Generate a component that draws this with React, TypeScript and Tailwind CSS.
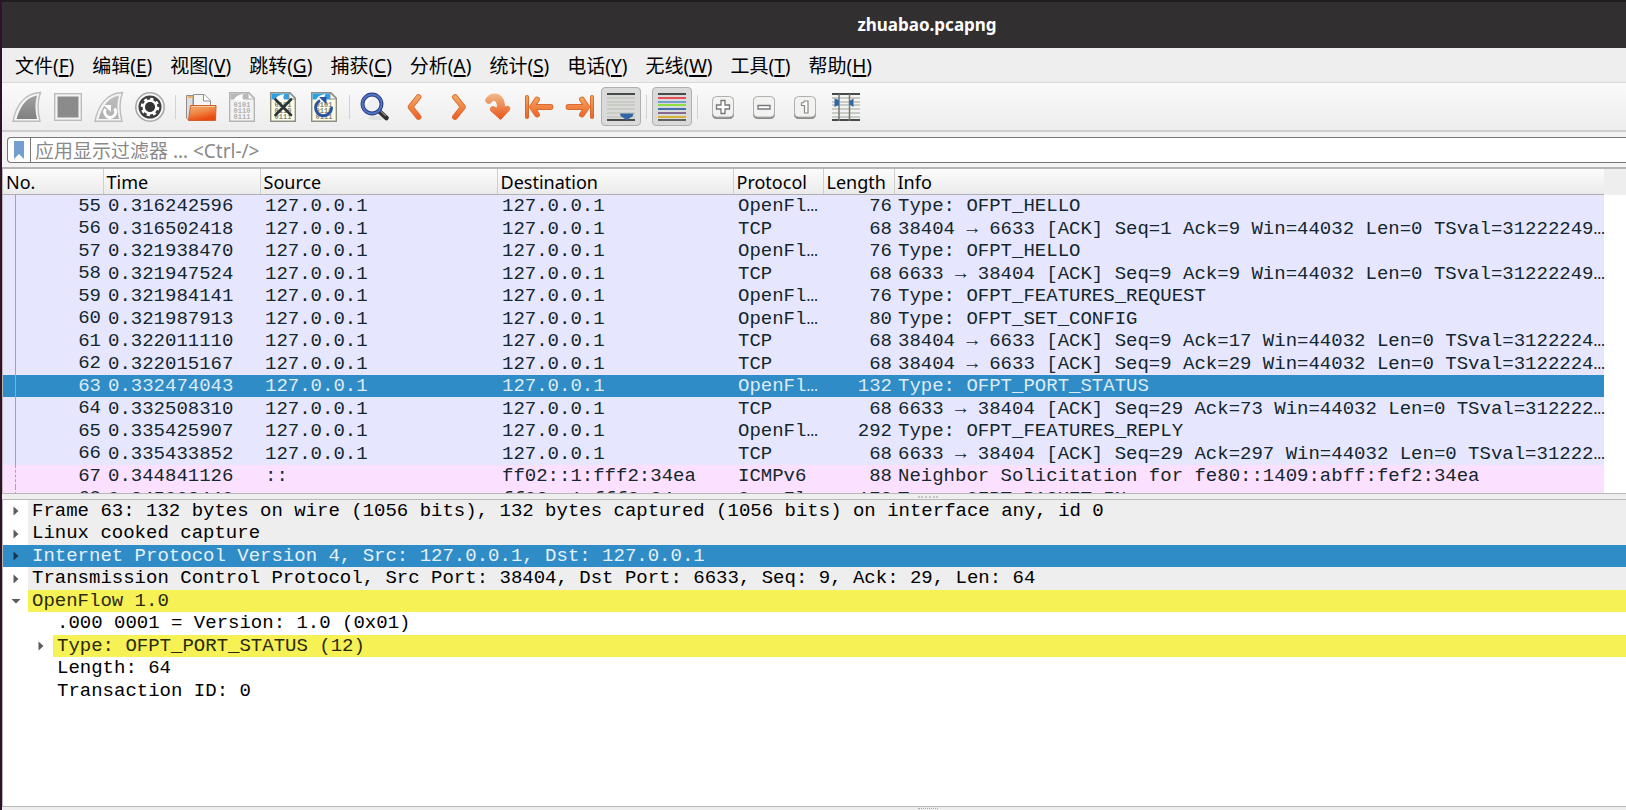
import { useState } from 'react';
import type { ReactNode } from 'react';
import clsx from 'clsx';

const menus = [
  ['文件', 'F'],
  ['编辑', 'E'],
  ['视图', 'V'],
  ['跳转', 'G'],
  ['捕获', 'C'],
  ['分析', 'A'],
  ['统计', 'S'],
  ['电话', 'Y'],
  ['无线', 'W'],
  ['工具', 'T'],
  ['帮助', 'H'],
];

const columns = [
  { name: 'No.', width: 'w-[100px]' },
  { name: 'Time', width: 'w-[157px]' },
  { name: 'Source', width: 'w-[237px]' },
  { name: 'Destination', width: 'w-[236px]' },
  { name: 'Protocol', width: 'w-[90px]' },
  { name: 'Length', width: 'w-[71px]' },
  { name: 'Info', width: '' },
];

const local = '127.0.0.1';

const packets = [
  { no: 55, time: '0.316242596', src: local, dst: local, protocol: 'OpenFl…', length: 76, info: 'Type: OFPT_HELLO' },
  { no: 56, time: '0.316502418', src: local, dst: local, protocol: 'TCP', length: 68, info: '38404 → 6633 [ACK] Seq=1 Ack=9 Win=44032 Len=0 TSval=31222249…' },
  { no: 57, time: '0.321938470', src: local, dst: local, protocol: 'OpenFl…', length: 76, info: 'Type: OFPT_HELLO' },
  { no: 58, time: '0.321947524', src: local, dst: local, protocol: 'TCP', length: 68, info: '6633 → 38404 [ACK] Seq=9 Ack=9 Win=44032 Len=0 TSval=31222249…' },
  { no: 59, time: '0.321984141', src: local, dst: local, protocol: 'OpenFl…', length: 76, info: 'Type: OFPT_FEATURES_REQUEST' },
  { no: 60, time: '0.321987913', src: local, dst: local, protocol: 'OpenFl…', length: 80, info: 'Type: OFPT_SET_CONFIG' },
  { no: 61, time: '0.322011110', src: local, dst: local, protocol: 'TCP', length: 68, info: '38404 → 6633 [ACK] Seq=9 Ack=17 Win=44032 Len=0 TSval=3122224…' },
  { no: 62, time: '0.322015167', src: local, dst: local, protocol: 'TCP', length: 68, info: '38404 → 6633 [ACK] Seq=9 Ack=29 Win=44032 Len=0 TSval=3122224…' },
  { no: 63, time: '0.332474043', src: local, dst: local, protocol: 'OpenFl…', length: 132, info: 'Type: OFPT_PORT_STATUS' },
  { no: 64, time: '0.332508310', src: local, dst: local, protocol: 'TCP', length: 68, info: '6633 → 38404 [ACK] Seq=29 Ack=73 Win=44032 Len=0 TSval=312222…' },
  { no: 65, time: '0.335425907', src: local, dst: local, protocol: 'OpenFl…', length: 292, info: 'Type: OFPT_FEATURES_REPLY' },
  { no: 66, time: '0.335433852', src: local, dst: local, protocol: 'TCP', length: 68, info: '6633 → 38404 [ACK] Seq=29 Ack=297 Win=44032 Len=0 TSval=31222…' },
  { no: 67, time: '0.344841126', src: '::', dst: 'ff02::1:fff2:34ea', protocol: 'ICMPv6', length: 88, info: 'Neighbor Solicitation for fe80::1409:abff:fef2:34ea' },
  { no: 68, time: '0.345083440', src: '::', dst: 'ff02::1:fff2:34ea', protocol: 'OpenFl…', length: 172, info: 'Type: OFPT_PACKET_IN' },
];

const details = [
  { text: 'Frame 63: 132 bytes on wire (1056 bits), 132 bytes captured (1056 bits) on interface any, id 0', depth: 0, arrow: 'right', tone: 'gray' },
  { text: 'Linux cooked capture', depth: 0, arrow: 'right', tone: 'gray' },
  { text: 'Internet Protocol Version 4, Src: 127.0.0.1, Dst: 127.0.0.1', depth: 0, arrow: 'right', tone: 'gray' },
  { text: 'Transmission Control Protocol, Src Port: 38404, Dst Port: 6633, Seq: 9, Ack: 29, Len: 64', depth: 0, arrow: 'right', tone: 'gray' },
  { text: 'OpenFlow 1.0', depth: 0, arrow: 'down', tone: 'yellow' },
  { text: '.000 0001 = Version: 1.0 (0x01)', depth: 1, arrow: '', tone: '' },
  { text: 'Type: OFPT_PORT_STATUS (12)', depth: 1, arrow: 'right', tone: 'yellow' },
  { text: 'Length: 64', depth: 1, arrow: '', tone: '' },
  { text: 'Transaction ID: 0', depth: 1, arrow: '', tone: '' },
];

function Icon({ children }: { children: ReactNode }) {
  return (
    <svg viewBox="0 0 32 32" className="h-8 w-8 shrink-0" fill="none" aria-hidden="true">
      {children}
    </svg>
  );
}

function FinIcon({ id, from, to, children }: { id: string; from: string; to: string; children?: ReactNode }) {
  return (
    <Icon>
      <defs>
        <linearGradient id={id} x1="0" y1="0" x2="0" y2="1">
          <stop offset="0" stopColor={from} />
          <stop offset="1" stopColor={to} />
        </linearGradient>
      </defs>
      <path d="M2 30.3C4.500 17 12 2 29.500 1.500C26 11 26.500 21 29 30.300Z" fill="#f4f4f4" stroke="#bcbcbc" strokeWidth="1.4" />
      <path d="M5.500 28C8.500 17.500 14 6.500 26 4.500C23.800 12 24 20 26 28Z" fill={`url(#${id})`} />
      {children}
    </Icon>
  );
}

function StopIcon() {
  return (
    <Icon>
      <rect x="2.7" y="2.7" width="26.6" height="26.6" fill="#f4f4f4" stroke="#bcbcbc" strokeWidth="1.4" />
      <rect x="5.5" y="5.5" width="21" height="21" fill="#8b8b8b" />
    </Icon>
  );
}

function OptionsIcon() {
  return (
    <Icon>
      <circle cx="16" cy="16" r="14.2" fill="#f6f6f6" stroke="#a9a9a9" strokeWidth="1.6" />
      <circle cx="16" cy="16" r="11.5" fill="#3d3d3d" />
      <circle cx="16" cy="16" r="6.2" stroke="#fff" strokeWidth="2.6" />
      <circle cx="16" cy="16" r="8.1" stroke="#fff" strokeWidth="2.4" strokeDasharray="3.18 3.18" />
      <circle cx="16" cy="16" r="4.8" fill="#333" />
    </Icon>
  );
}

function OpenIcon() {
  return (
    <Icon>
      <defs>
        <linearGradient id="folder" x1="0" y1="0" x2="0.4" y2="1">
          <stop offset="0" stopColor="#f0b078" />
          <stop offset="0.5" stopColor="#f08848" />
          <stop offset="1" stopColor="#e84a10" />
        </linearGradient>
      </defs>
      <path d="M1.500 4.500H8V29H3.500L1.500 27Z" fill="#dedede" stroke="#8d8d8d" />
      <path d="M3 6H8" stroke="#f0a040" strokeWidth="1.5" />
      <path d="M8.500 15V3.500H19L25.500 9.500V15Z" fill="#f5f5f5" stroke="#909090" />
      <path d="M18.500 3.500V10H25.500" fill="#fff" stroke="#909090" />
      <path d="M5.500 14.500H31L30.500 29.500H3.500Z" fill="url(#folder)" stroke="#d0602c" />
      <path d="M6.500 15.500H30" stroke="#f8c89a" />
    </Icon>
  );
}

function FileIcon({ gray, children }: { gray?: boolean; children?: ReactNode }) {
  const edge = gray ? '#b4b4b4' : '#8b8f86';

  return (
    <Icon>
      <path d="M3.700 1.700H23L28.300 7V30.300H3.700Z" fill={gray ? '#f3f3f3' : '#fdfde8'} stroke={edge} strokeWidth="1.4" />
      <path d="M4.500 2.500H22.500V8.500H4.500Z" fill={gray ? '#b8b8b8' : '#2f9fe4'} />
      <path d="M8 9C9.500 5.500 12 4 17.500 3C16 5.500 16 7 17.500 9Z" fill="#fff" />
      <path d="M22 1.700V8H28.300Z" fill="#fafafa" stroke={edge} />
      <g fill={gray ? '#b0b0b0' : '#85857c'} fontFamily="Liberation Mono" fontSize="7" fontWeight="700" textAnchor="middle">
        <text x="16" y="16">0101</text>
        <text x="16" y="22">0110</text>
        <text x="16" y="28">0111</text>
      </g>
      {children}
    </Icon>
  );
}

function FindIcon() {
  return (
    <Icon>
      <ellipse cx="18" cy="27" rx="9" ry="2" fill="#e0e0e0" />
      <path d="M20 20L27.500 27" stroke="#2e2e2e" strokeWidth="4.6" strokeLinecap="round" />
      <path d="M21.500 20L27 25" stroke="#85857c" strokeWidth="1.5" />
      <circle cx="13" cy="13" r="9.5" fill="#eef0f4" stroke="#22387c" strokeWidth="3.8" />
      <circle cx="13" cy="13" r="9.6" stroke="#5573c4" strokeWidth="2" />
      <path d="M7.500 13A5.500 5.500 0 0 1 13 7.500" stroke="#fff" strokeWidth="2" />
    </Icon>
  );
}

// Orange glyphs share a darker rim under a gradient stroke
function OrangeIcon({ id, d, bar }: { id: string; d: string; bar?: string }) {
  return (
    <Icon>
      <defs>
        <linearGradient id={id} gradientUnits="userSpaceOnUse" x1="16" y1="3" x2="16" y2="29">
          <stop offset="0" stopColor="#f2b068" />
          <stop offset="1" stopColor="#ec5a20" />
        </linearGradient>
      </defs>
      {bar && <path d={bar} stroke="#dc6428" strokeWidth="4" strokeLinecap="round" />}
      {bar && <path d={bar} stroke={`url(#${id})`} strokeWidth="2.2" strokeLinecap="round" />}
      <path d={d} stroke="#dc6a30" strokeWidth="5.8" strokeLinecap="round" strokeLinejoin="round" />
      <path d={d} stroke={`url(#${id})`} strokeWidth="4" strokeLinecap="round" strokeLinejoin="round" />
    </Icon>
  );
}

function GoToIcon() {
  return (
    <Icon>
      <defs>
        <linearGradient id="goto" x1="0" y1="0" x2="0" y2="1">
          <stop offset="0" stopColor="#f0b888" />
          <stop offset="1" stopColor="#ea5418" />
        </linearGradient>
      </defs>
      <path
        d="M3.500 9.500C5 4.500 9 3 13 3C19 3 22.500 8 22.500 16L26 15Q29 16 27.500 19L18.500 28.500L8.500 19.500Q7.500 16 11 15.500L15.500 17C15.500 11.500 14 9 11 9.500C9.500 10 9.500 12 7.500 12.500Q4 12.500 3.500 9.500Z"
        fill="url(#goto)"
        stroke="url(#goto)"
      />
    </Icon>
  );
}

function LinesIcon({ colors, children }: { colors: string[]; children?: ReactNode }) {
  return (
    <Icon>
      {colors.map((color, i) => (
        <rect key={i} x="2" y={[2, 6, 10, 13, 17, 21, 25, 28][i]} width="28" height="2" fill={color} />
      ))}
      {children}
    </Icon>
  );
}

function KeyIcon({ children }: { children: ReactNode }) {
  return (
    <Icon>
      <rect x="5" y="6" width="22" height="22" rx="4.5" fill="#8a8a8a" />
      <rect x="5.5" y="5.5" width="21" height="20.5" rx="4" fill="#f2f2f0" stroke="#b0b0b0" />
      {children}
    </Icon>
  );
}

const gray = '#c9ccc4';
const dark = '#454a4b';

const tools: ({ label: string; icon: ReactNode; pressed?: boolean } | null)[] = [
  { label: 'Start capture', icon: <FinIcon id="start" from="#a0a0a0" to="#808080" /> },
  { label: 'Stop capture', icon: <StopIcon /> },
  {
    label: 'Restart capture',
    icon: (
      <FinIcon id="restart" from="#bdbdbd" to="#b0b0b0">
        <path d="M12.500 18A5.500 5.500 0 1 0 21.500 17.500" stroke="#fff" strokeWidth="3" />
        <path d="M10.500 14H18V21Z" fill="#fff" />
      </FinIcon>
    ),
  },
  { label: 'Capture options', icon: <OptionsIcon /> },
  null,
  { label: 'Open', icon: <OpenIcon /> },
  { label: 'Save', icon: <FileIcon gray /> },
  {
    label: 'Close file',
    icon: (
      <FileIcon>
        <path d="M8.500 8.500L24 24M24 8.500L8.500 24" stroke="#2e3436" strokeWidth="2.6" strokeLinecap="round" />
      </FileIcon>
    ),
  },
  {
    label: 'Reload file',
    icon: (
      <FileIcon>
        <path d="M12 9.500A8 8 0 1 0 23.500 16" stroke="#2a56a0" strokeWidth="3" />
        <path d="M11 6H18.500V13.500Z" fill="#2a56a0" />
      </FileIcon>
    ),
  },
  null,
  { label: 'Find packet', icon: <FindIcon /> },
  { label: 'Previous packet', icon: <OrangeIcon id="prev" d="M18.500 6L10.500 16L18.500 26" /> },
  { label: 'Next packet', icon: <OrangeIcon id="next" d="M14 6L22 16L14 26" /> },
  { label: 'Go to packet', icon: <GoToIcon /> },
  { label: 'First packet', icon: <OrangeIcon id="first" bar="M4 6V26" d="M14 8.500L9 16L14 23.500M9.500 16H27.500" /> },
  { label: 'Last packet', icon: <OrangeIcon id="last" bar="M28 6V26" d="M18 8.500L23 16L18 23.500M22.500 16H4.500" /> },
  {
    label: 'Auto scroll',
    pressed: true,
    icon: (
      <LinesIcon colors={[dark, gray, gray, gray, gray, gray, gray, dark]}>
        <path d="M15 22.500H28.500C28.500 25 27 26 25.500 26.500L22 29.500L18 26.500C16.500 26 15 25 15 22.500Z" fill="#3465a4" />
      </LinesIcon>
    ),
  },
  null,
  {
    label: 'Colorize',
    pressed: true,
    icon: <LinesIcon colors={[dark, '#e85055', '#729fcf', '#8fe040', '#4470ac', '#866a90', '#d6b238', '#60635f']} />,
  },
  null,
  {
    label: 'Zoom in',
    icon: (
      <KeyIcon>
        <path d="M14 9.500H18V14H22.500V18H18V22.500H14V18H9.500V14H14Z" fill="#fff" stroke="#777" strokeWidth="1.3" />
      </KeyIcon>
    ),
  },
  {
    label: 'Zoom out',
    icon: (
      <KeyIcon>
        <path d="M10 14.500H22V18H10Z" fill="#fff" stroke="#777" strokeWidth="1.3" />
      </KeyIcon>
    ),
  },
  {
    label: 'Normal size',
    icon: (
      <KeyIcon>
        <path d="M15.500 10H19V22H15.500V14.500H12.500V12Q15 12 15.500 10Z" fill="#fff" stroke="#888" strokeWidth="1.2" />
      </KeyIcon>
    ),
  },
  {
    label: 'Resize columns',
    icon: (
      <LinesIcon colors={[dark, gray, gray, gray, gray, gray, gray, dark]}>
        <path d="M9 3V30M19.500 3V30" stroke="#777a76" strokeWidth="1.5" />
        <path d="M4.500 7.500L9 9V14L4.500 16ZM23.500 7.500L19.500 10V13.500L23.500 16Z" fill="#3465a4" />
      </LinesIcon>
    ),
  },
];

function Arrow({ kind }: { kind: string }) {
  return (
    <svg viewBox="0 0 10 10" className="h-[10px] w-[10px]" aria-hidden="true">
      {kind === 'right' && <path d="M2.500 0.500L7.500 5L2.500 9.500Z" fill="currentColor" />}
      {kind === 'down' && <path d="M0.500 3H9.500L5 7.500Z" fill="currentColor" />}
    </svg>
  );
}

export default function App() {
  const [filter, setFilter] = useState('');
  const [selected, setSelected] = useState(63);
  const [selectedDetail, setSelectedDetail] = useState(2);

  return (
    <div className="flex h-screen flex-col overflow-hidden border-l-2 border-[#2f1226] bg-[#eeeeee] font-['Noto_Sans','Noto_Sans_CJK_SC',sans-serif] text-black">
      <header className="flex h-12 shrink-0 items-center justify-center border-t-2 border-[#1f1d1d] bg-[#322f30] pl-[226px]">
        <h1 className="text-[17px] font-bold text-white">zhuabao.pcapng</h1>
      </header>

      <nav className="flex h-[35px] shrink-0 items-center gap-[18px] border-b border-[#d8d8d8] px-[13px] pt-px">
        {menus.map(([name, key]) => (
          <button key={key} className="text-[19px] leading-6 whitespace-nowrap">
            {name}(<span className="underline decoration-2 underline-offset-2">{key}</span>)
          </button>
        ))}
      </nav>

      <div className="flex h-[49px] shrink-0 items-center gap-px border-b-2 border-[#cdcdcd] bg-linear-to-b from-[#fafafa] to-[#ededed] px-[5px]">
        {tools.map((tool, i) =>
          tool ? (
            <button
              key={tool.label}
              aria-label={tool.label}
              aria-pressed={tool.pressed}
              className={clsx(
                'flex h-[39px] w-10 shrink-0 items-center justify-center rounded border',
                tool.pressed ? 'border-[#b0b0b0] bg-[#dadada]' : 'border-transparent'
              )}
            >
              {tool.icon}
            </button>
          ) : (
            <div key={i} className="flex w-[9px] shrink-0 justify-center">
              <div className="h-6 w-px bg-[#d2d2d2]" />
            </div>
          )
        )}
      </div>

      <div className="shrink-0 border-b-2 border-[#b5b5b5] bg-[#f3f3f3] pt-[5px] pb-1 pl-[5px]">
        <div className="flex h-[26px] rounded-l border border-r-0 border-[#777777] bg-white">
          <button aria-label="Bookmarks" className="flex w-[23px] shrink-0 justify-center border-r border-[#777777] pt-[3px]">
            <svg viewBox="0 0 10 18" className="h-[18px] w-[10px]" aria-hidden="true">
              <path d="M0 0H10V18L5 13L0 18Z" fill="#729fcf" />
            </svg>
          </button>
          <input
            aria-label="应用显示过滤器"
            value={filter}
            onChange={(e) => setFilter(e.target.value)}
            placeholder="应用显示过滤器 … <Ctrl-/>"
            className="min-w-0 flex-1 pt-px pl-1 text-[19px] leading-6 outline-none placeholder:text-[#8a8a8a]"
          />
        </div>
      </div>

      <div className="flex h-[324px] shrink-0 overflow-hidden border-l border-[#b8b8b8] bg-white">
        <div className="min-w-0 flex-1">
          <table className="w-full table-fixed border-collapse">
            <thead>
              <tr className="h-[25px] bg-linear-to-b from-[#fcfcfc] to-[#eaeaea]">
                {columns.map((column) => (
                  <th
                    key={column.name}
                    className={clsx(
                      'border-r border-b border-r-[#cfcfcf] border-b-[#b0b0b0] p-0 pt-px pl-[3px] text-left text-[18px] leading-6 font-normal last:border-r-0',
                      column.width
                    )}
                  >
                    {column.name}
                  </th>
                ))}
              </tr>
            </thead>
            <tbody className="font-['Liberation_Mono',monospace] text-[19px] leading-[22px] whitespace-pre">
              {packets.map((packet) => (
                <tr
                  key={packet.no}
                  onClick={() => setSelected(packet.no)}
                  className={clsx(
                    'odd:h-[22px] even:h-[23px]',
                    packet.no === selected
                      ? 'bg-[#308cc6] text-[#dcebf5]'
                      : packet.no >= 67
                        ? 'bg-[#fce0ff] text-[#12272e]'
                        : 'bg-[#e7e6ff] text-[#12272e]'
                  )}
                >
                  <td className="h-[inherit] p-0">
                    <div className="flex h-[inherit] justify-between pr-[2px]">
                      <span className={clsx('w-[13px] border-r', packet.no >= 67 ? 'border-dashed border-[#a8a0b4]' : 'border-[#a0a4b4]')} />
                      {packet.no}
                    </div>
                  </td>
                  <td className="p-0 pl-[5px]">{packet.time}</td>
                  <td className="p-0 pl-[5px]">{packet.src}</td>
                  <td className="p-0 pl-[5px]">{packet.dst}</td>
                  <td className="p-0 pl-[5px]">{packet.protocol}</td>
                  <td className="p-0 pr-[2px] text-right">{packet.length}</td>
                  <td className="p-0 pl-1">{packet.info}</td>
                </tr>
              ))}
            </tbody>
          </table>
        </div>
        <div className="w-[22px] shrink-0">
          <div className="h-[26px] bg-[#eeeeee]" />
        </div>
      </div>

      <div className="flex h-[7px] shrink-0 items-center justify-center border-y border-[#b8b8b8] bg-[#eeeeee] pl-[228px]">
        <div className="w-5 border-t-2 border-dotted border-[#c4c4c4]" />
      </div>

      <ul className="min-h-0 flex-1 overflow-hidden border-l border-[#b8b8b8] bg-white font-['Liberation_Mono',monospace] text-[19px] leading-[23px]">
        {details.map((row, i) => (
          <li key={row.text} className={clsx('odd:h-[22px] even:h-[23px]', i === selectedDetail && 'bg-[#308cc6]')}>
            <button
              onClick={() => setSelectedDetail(i)}
              className={clsx('flex h-full w-full text-left whitespace-pre', row.depth === 1 && 'pl-[25px]')}
            >
              <span className={clsx('flex h-full w-[25px] shrink-0 items-center justify-center', i === selectedDetail ? 'text-[#17384d]' : 'text-[#5c5c5c]')}>
                <Arrow kind={row.arrow} />
              </span>
              <span
                className={clsx(
                  'h-full flex-1 pl-1',
                  i === selectedDetail && 'text-[#e4f0f8]',
                  i !== selectedDetail && row.tone === 'gray' && 'bg-[#eeeeee]',
                  i !== selectedDetail && row.tone === 'yellow' && 'bg-[#f6f154] text-[#2a2a10]'
                )}
              >
                {row.text}
              </span>
            </button>
          </li>
        ))}
      </ul>

      <div className="flex h-1 shrink-0 justify-center border-t border-[#b8b8b8] bg-[#eeeeee] pt-px pl-[228px]">
        <div className="w-5 border-t border-dotted border-[#aaaaaa]" />
      </div>
    </div>
  );
}
